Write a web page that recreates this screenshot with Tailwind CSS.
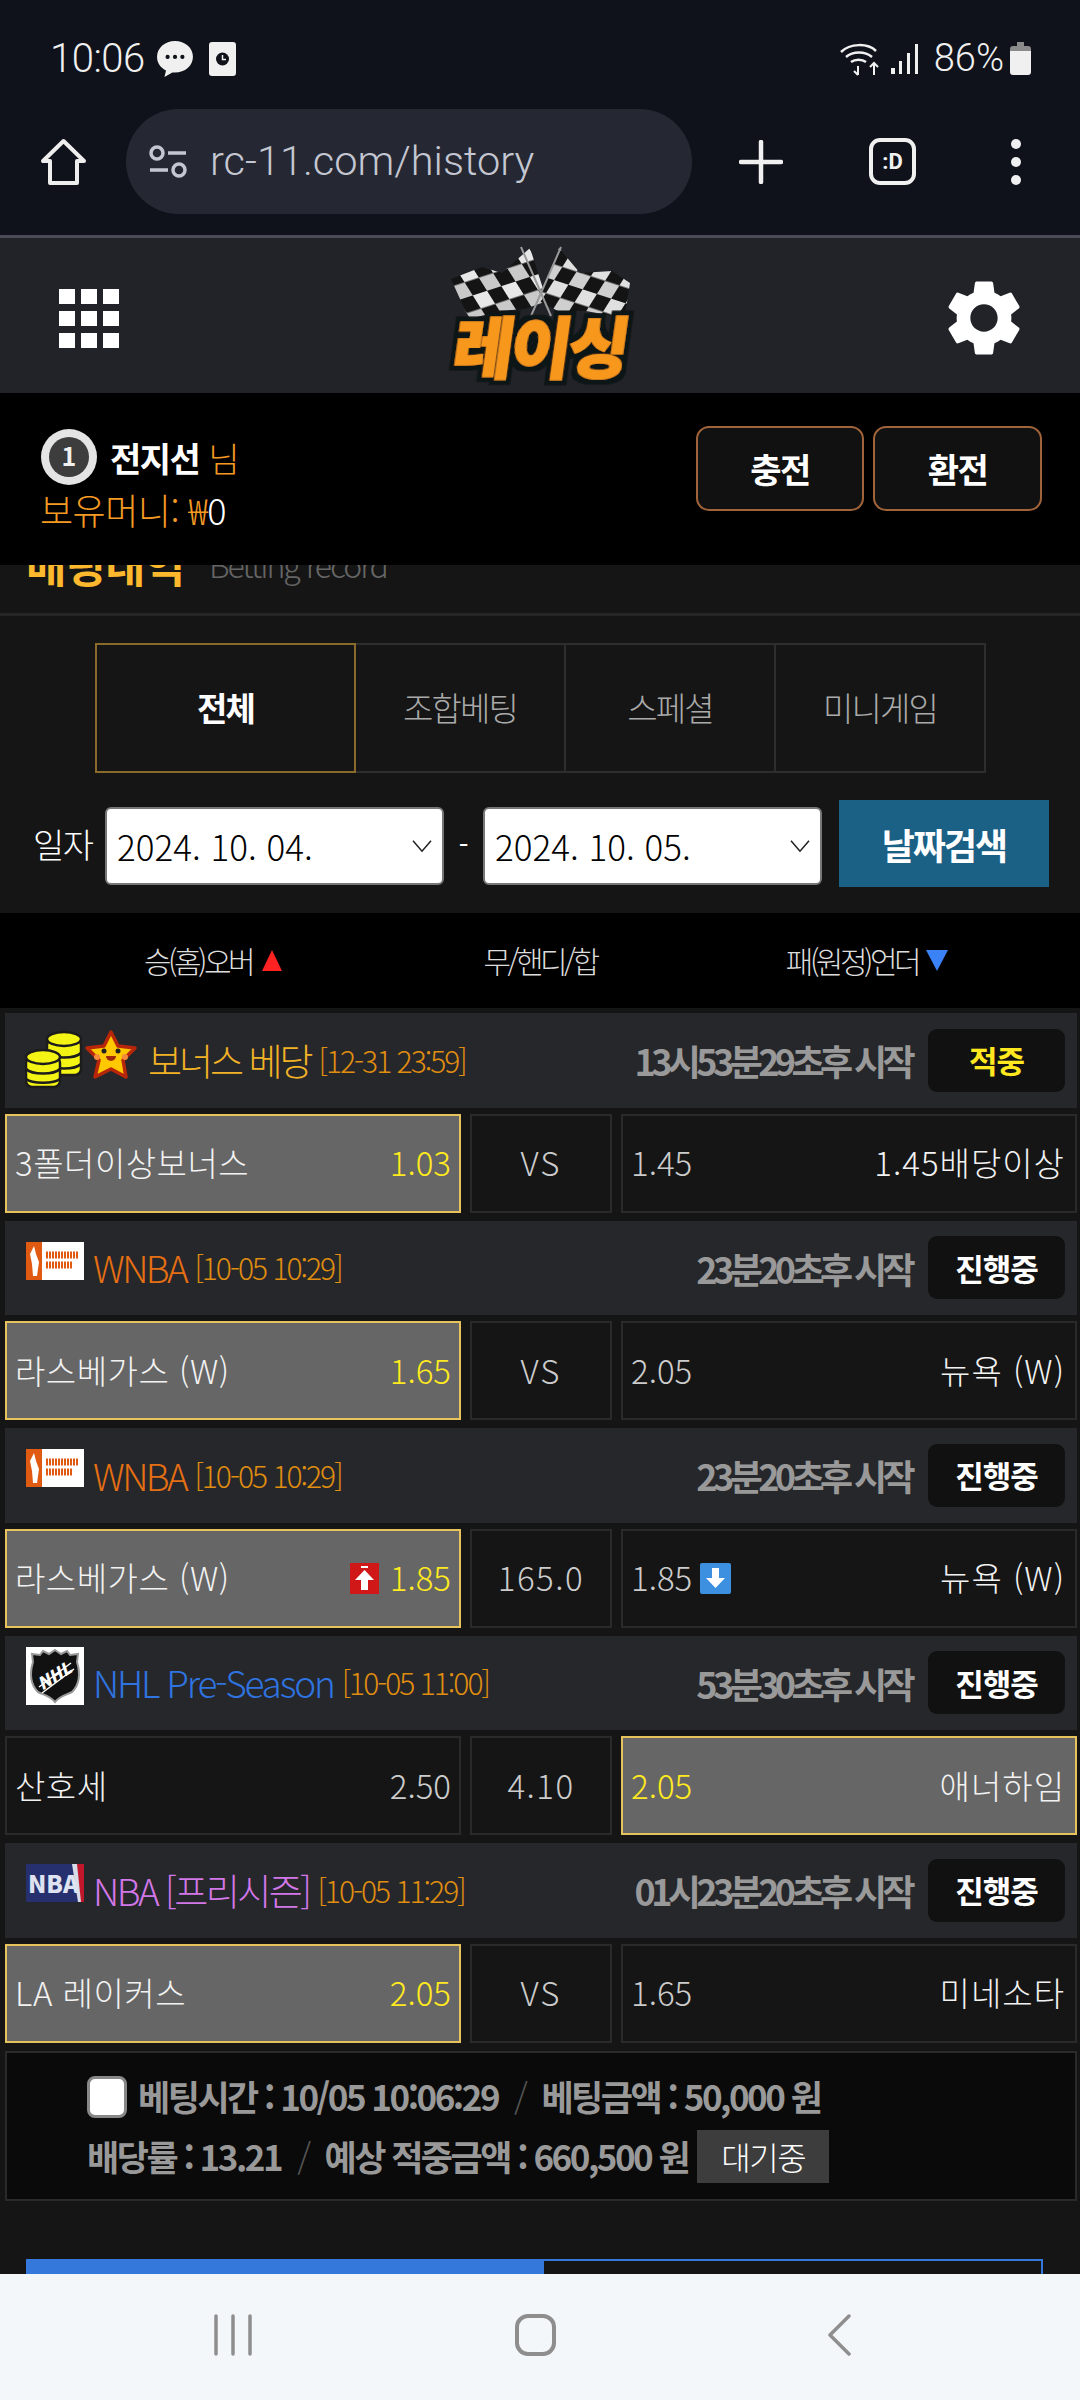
<!DOCTYPE html>
<html lang="ko">
<head>
    <meta charset="UTF-8">
    <title>레이싱 - 배팅내역</title>
    <meta name="viewport" content="width=device-width, initial-scale=1.0">
    <script src="https://cdn.jsdelivr.net/npm/@tailwindcss/browser@4"></script>
</head>
<body class="m-0 bg-black font-['Noto_Sans_CJK_KR','Noto_Sans',sans-serif]">
<div class="relative flex h-[2400px] w-[1080px] flex-col overflow-hidden bg-[#151515]">

    <!-- browser chrome -->
    <div class="h-[235px] shrink-0 bg-[#0f121a] text-white">
        <div class="flex h-[109px] items-center pl-[50px] pr-[49px] pt-[8px] font-['Roboto',sans-serif]">
            <span class="w-[108px] text-[40px] font-light tracking-[-0.5px] text-[#f0f0f0]">10:06</span>
            <svg class="-ml-[2px] h-[38px] w-[38px]" viewBox="0 0 36 36"><path d="M18 1C8.500 1 1 7.600 1 16c0 5.600 3.400 10.300 8.500 12.800L8 35l7.500-4.300c.8.100 1.700.2 2.500.2 9.500 0 17-6.600 17-15S27.500 1 18 1z" fill="#f0f0f0"/><circle cx="11" cy="16" r="2" fill="#0f121a"/><circle cx="18" cy="16" r="2" fill="#0f121a"/><circle cx="25" cy="16" r="2" fill="#0f121a"/></svg>
            <svg class="ml-[15px] h-[34px] w-[27px]" viewBox="0 0 27 34"><rect width="27" height="34" rx="3" fill="#f0f0f0"/><circle cx="13.500" cy="17" r="6.500" fill="#0f121a"/><path d="M13.500 13v4.500h3.500" stroke="#f0f0f0" stroke-width="1.500" fill="none"/></svg>
            <div class="flex-1"></div>
            <svg class="h-[34px] w-[42px]" viewBox="0 0 42 34" fill="none" stroke="#f0f0f0" stroke-width="2.500"><path d="M1 10C10 1 28 1 36 9M6 15c7-6 19-6 26 0M11 20c4-3 11-3 15 0"/><path d="M18 24v9M14 29l4 4M34 33V21M30 25l4-4 4 4" stroke-width="2"/></svg>
            <svg class="ml-[9px] h-[30px] w-[28px]" viewBox="0 0 28 30" fill="#f0f0f0"><rect x="0" y="24" width="4" height="6"/><rect x="8" y="17" width="3" height="13"/><rect x="16" y="9" width="3" height="21"/><rect x="24" y="0" width="3" height="30"/></svg>
            <span class="ml-[15px] text-[38px] font-light text-[#f0f0f0]">86%</span>
            <svg class="ml-[6px] h-[33px] w-[21px]" viewBox="0 0 21 33"><path d="M7 0h7v4h4a3 3 0 0 1 3 3v2H0V7a3 3 0 0 1 3-3h4z" fill="#8a8a8a"/><path d="M0 9h21v21a3 3 0 0 1-3 3H3a3 3 0 0 1-3-3z" fill="#f0f0f0"/></svg>
        </div>
        <div class="flex h-[105px] items-center">
            <svg class="ml-[40px] h-[48px] w-[47px]" viewBox="0 0 47 48" fill="none" stroke="#eee" stroke-width="4" stroke-linejoin="round"><path d="M23.500 3 3 23h7v22h27V23h7z"/></svg>
            <div class="ml-[39px] flex h-[105px] w-[566px] items-center rounded-full bg-[#252833] pl-[22px]">
                <svg class="h-[34px] w-[40px]" viewBox="0 0 40 34" fill="none" stroke="#c4c7d2" stroke-width="3.500"><circle cx="9" cy="8" r="6"/><path d="M20 8h18M2 25h18"/><circle cx="31" cy="25" r="6"/></svg>
                <span class="ml-[22px] font-['Roboto',sans-serif] text-[41.500px] font-light text-[#c4c7d2]">rc-11.com/history</span>
            </div>
            <svg class="ml-[47px] h-[44px] w-[44px]" viewBox="0 0 44 44" stroke="#f0f0f0" stroke-width="4.500" stroke-linecap="round"><path d="M22 2v40M2 22h40"/></svg>
            <div class="ml-[86px] flex h-[47px] w-[47px] items-center justify-center rounded-[11px] border-[4px] border-[#f0f0f0] font-['Roboto',sans-serif] text-[22px] font-bold text-[#f0f0f0]">:D</div>
            <div class="ml-[95px] flex flex-col gap-[8px]">
                <span class="h-[10px] w-[10px] rounded-full bg-[#f0f0f0]"></span>
                <span class="h-[10px] w-[10px] rounded-full bg-[#f0f0f0]"></span>
                <span class="h-[10px] w-[10px] rounded-full bg-[#f0f0f0]"></span>
            </div>
        </div>
    </div>
    <div class="h-[3px] shrink-0 bg-[#4a4b58]"></div>

    <!-- site header -->
    <div class="relative flex h-[155px] shrink-0 items-center justify-between bg-[#212328] pl-[59px] pr-[58px] pt-[5px]">
        <div class="grid grid-cols-[16px_16px_16px] grid-rows-[15px_15px_15px] gap-[7px] gap-x-[6px]">
            <span class="bg-white"></span><span class="bg-white"></span><span class="bg-white"></span>
            <span class="bg-white"></span><span class="bg-white"></span><span class="bg-white"></span>
            <span class="bg-white"></span><span class="bg-white"></span><span class="bg-white"></span>
        </div>
        <!-- logo, flags and wordmark -->
        <svg class="absolute left-[440px] top-[5px] h-[148px] w-[200px]" viewBox="0 0 200 148">
            <defs>
                <pattern id="chkL" width="30" height="30" patternUnits="userSpaceOnUse" patternTransform="rotate(-18) skewX(14)">
                    <rect width="30" height="30" fill="#141414"/><rect width="15" height="15" fill="#e8e8e8"/><rect x="15" y="15" width="15" height="15" fill="#c9c9c9"/>
                </pattern>
                <pattern id="chkR" width="30" height="30" patternUnits="userSpaceOnUse" patternTransform="rotate(18) skewX(-14)">
                    <rect width="30" height="30" fill="#141414"/><rect width="15" height="15" fill="#e0e0e0"/><rect x="15" y="15" width="15" height="15" fill="#cfcfcf"/>
                </pattern>
                <filter id="logoEdge" x="-10%" y="-20%" width="120%" height="140%">
                    <feMorphology in="SourceAlpha" operator="dilate" radius="5" result="fat"/>
                    <feFlood flood-color="#111214"/>
                    <feComposite in2="fat" operator="in"/>
                    <feMerge><feMergeNode/><feMergeNode in="SourceGraphic"/></feMerge>
                </filter>
            </defs>
            <polygon points="11,36 42,24 62,30 90,5 107,58 85,66 60,68 37,74 30,78" fill="url(#chkL)"/>
            <polygon points="190,40 172,28 140,30 119,5 99,58 118,68 146,68 168,72 184,78" fill="url(#chkR)"/>
            <path d="M81 4 111 73M121 4 91 73" stroke="#9a9a9a" stroke-width="2"/>
            <text x="97" y="130" text-anchor="middle" transform="skewX(-8) translate(18 0)" font-size="66" font-weight="900" letter-spacing="-3" fill="#f7971e" stroke="#f7971e" stroke-width="1.500" filter="url(#logoEdge)">레이싱</text>
        </svg>
        <svg class="h-[76px] w-[76px]" viewBox="2 2 20 20" fill="#fff"><path d="M19.140 12.940c.040-.300.060-.610.060-.940 0-.320-.020-.640-.070-.940l2.030-1.580a.490.490 0 0 0 .120-.610l-1.920-3.320a.488.488 0 0 0-.590-.220l-2.390.960c-.500-.380-1.030-.700-1.620-.940l-.360-2.540a.484.484 0 0 0-.480-.410h-3.840c-.240 0-.430.170-.470.410l-.360 2.540c-.590.240-1.130.570-1.620.940l-2.390-.960c-.220-.080-.470 0-.590.220L2.740 8.870c-.120.210-.080.470.120.610l2.030 1.580c-.050.300-.090.630-.090.940s.020.640.070.940l-2.030 1.580a.490.490 0 0 0-.120.610l1.920 3.320c.120.220.370.290.590.220l2.390-.960c.500.380 1.030.700 1.620.940l.360 2.540c.050.240.240.410.480.410h3.840c.240 0 .440-.170.470-.410l.360-2.540c.590-.240 1.130-.560 1.620-.94l2.390.960c.220.080.470 0 .590-.220l1.920-3.320c.120-.220.070-.47-.12-.61l-2.010-1.580zM12 15.600c-1.980 0-3.600-1.620-3.600-3.600s1.620-3.600 3.600-3.600 3.600 1.620 3.600 3.600-1.620 3.600-3.600 3.600z"/></svg>
    </div>

    <!-- user bar -->
    <div class="flex h-[172px] shrink-0 justify-between bg-black pl-[40px] pr-[38px] pt-[32px]">
        <div>
            <div class="flex h-[64px] items-center">
                <svg class="h-[58px] w-[58px]" viewBox="0 0 58 58"><circle cx="29" cy="29" r="28" fill="#e4e4e4"/><circle cx="29" cy="29" r="20" fill="#3d3d3d"/><text x="29" y="38" text-anchor="middle" font-size="25" font-weight="700" fill="#f0f0f0">1</text></svg>
                <span class="ml-[12px] text-[34px] font-bold tracking-[-1.500px] text-white">전지선</span>
                <span class="ml-[9px] text-[34px] font-light text-[#f59a23]">님</span>
            </div>
            <div class="text-[36px] font-light leading-[40px] tracking-[-0.500px] text-[#f59a23]">보유머니: ₩<span class="text-white">0</span></div>
        </div>
        <div class="mt-[1px] flex h-[85px] gap-[9px]">
            <button class="h-[85px] w-[168px] rounded-[13px] border-2 border-[#a0633a] bg-[#111] text-[34px] font-bold tracking-[-1.500px] text-white">충전</button>
            <button class="h-[85px] w-[169px] rounded-[13px] border-2 border-[#a0633a] bg-[#111] text-[34px] font-bold tracking-[-1.500px] text-white">환전</button>
        </div>
    </div>

    <!-- page title, scrolled half under the user bar -->
    <div class="flex h-[51px] shrink-0 items-start overflow-hidden border-b-[3px] border-[#262626] pl-[26px]">
        <span class="-mt-[31px] text-[44px] font-bold leading-[60px] tracking-[-1px] text-[#fdb92e]">배팅내역</span>
        <span class="-mt-[28px] ml-[25px] text-[32px] font-light leading-[54px] tracking-[-2px] text-[#666]">Betting record</span>
    </div>

    <!-- tabs -->
    <div class="ml-[95px] mt-[27px] flex h-[130px] w-[891px] shrink-0 text-[33px] tracking-[-1.800px]">
        <div class="flex w-[261px] items-center justify-center border-2 border-[#8a6a2a] font-bold text-white">전체</div>
        <div class="flex w-[210px] items-center justify-center border-2 border-l-0 border-[#2e2e2e] font-light text-[#aaa]">조합베팅</div>
        <div class="flex w-[210px] items-center justify-center border-2 border-l-0 border-[#2e2e2e] font-light text-[#aaa]">스페셜</div>
        <div class="flex w-[210px] items-center justify-center border-2 border-l-0 border-[#2e2e2e] font-light text-[#aaa]">미니게임</div>
    </div>

    <!-- date search -->
    <div class="mt-[27px] flex h-[87px] shrink-0 items-center pl-[33px]">
        <span class="w-[72px] text-[34px] font-light tracking-[-1.500px] text-white">일자</span>
        <div class="mt-[5px] flex h-[78px] w-[339px] items-center justify-between rounded-[6px] border-2 border-[#777] bg-white pl-[10px] pr-[9px] text-[35px] font-light text-black">
            <span>2024. 10. 04.</span>
            <svg class="h-[12px] w-[22px]" viewBox="0 0 23 14" fill="none" stroke="#222" stroke-width="1.800"><path d="M1 1l10.500 12L22 1"/></svg>
        </div>
        <span class="w-[39px] text-center text-[28px] text-white">-</span>
        <div class="mt-[5px] flex h-[78px] w-[339px] items-center justify-between rounded-[6px] border-2 border-[#777] bg-white pl-[10px] pr-[9px] text-[35px] font-light text-black">
            <span>2024. 10. 05.</span>
            <svg class="h-[12px] w-[22px]" viewBox="0 0 23 14" fill="none" stroke="#222" stroke-width="1.800"><path d="M1 1l10.500 12L22 1"/></svg>
        </div>
        <button class="ml-[17px] h-[87px] w-[210px] bg-[#1b6085] text-[36px] font-bold tracking-[-2px] text-white">날짜검색</button>
    </div>

    <!-- column heads -->
    <div class="mt-[26px] grid h-[95px] shrink-0 grid-cols-[216px_1fr_216px] items-center bg-black pl-[105px] pr-[105px] text-[30px] font-light tracking-[-3.500px] text-[#ddd]">
        <div class="flex items-center gap-[10px] justify-self-center">승(홈)오버<span class="h-0 w-0 border-x-[10px] border-b-[21px] border-x-transparent border-b-[#f22]"></span></div>
        <div class="justify-self-center">무/핸디/합</div>
        <div class="flex items-center gap-[8px] justify-self-center whitespace-nowrap">패(원정)언더<span class="h-0 w-0 border-x-[11px] border-t-[21px] border-x-transparent border-t-[#3b82f6]"></span></div>
    </div>

    <!-- bets -->
    <div class="mt-[5px] flex shrink-0 flex-col gap-[8px] pl-[5px] pr-[3px]">

        <div>
            <div class="flex h-[94.500px] items-center justify-between bg-[#26272b] pl-[20px] pr-[12px]">
                <div class="flex items-center">
                    <svg class="h-[62px] w-[114px]" viewBox="0 0 114 62">
                        <g stroke="#1c1c1c" stroke-width="2.500" fill="#f4f414">
                            <rect x="22" y="10" width="34" height="36" rx="6"/><ellipse cx="39" cy="10" rx="17" ry="7"/><path d="M22 24c6 6 28 6 34 0M22 35c6 6 28 6 34 0" fill="none"/>
                            <rect x="1" y="28" width="34" height="30" rx="6"/><ellipse cx="18" cy="28" rx="17" ry="7"/><path d="M1 40c6 6 28 6 34 0M1 50c6 5 28 5 34 0" fill="none"/>
                        </g>
                        <path d="M86 3l7 14 17 2-12 12 3 17-15-8-16 8 4-17-12-12 17-2z" fill="#ffc800" stroke="#b8260a" stroke-width="3.500" stroke-linejoin="round"/>
                        <circle cx="79" cy="22" r="2.500" fill="#222"/><circle cx="93" cy="22" r="2.500" fill="#222"/><path d="M81 27h10a5 5 0 0 1-10 0z" fill="#a02808"/><circle cx="72" cy="28" r="3" fill="#f58a3a"/><circle cx="100" cy="28" r="3" fill="#f58a3a"/>
                    </svg>
                    <span class="ml-[9px] text-[37px] font-light tracking-[-3px] text-[#f3b325]">보너스 베당</span>
                    <span class="ml-[8px] text-[30px] font-light tracking-[-2px] text-[#e08e10]">[12-31 23:59]</span>
                </div>
                <div class="flex items-center">
                    <span class="text-[36px] font-bold tracking-[-4.600px] text-[#999]">13시53분29초후 시작</span>
                    <span class="ml-[17px] flex h-[63px] w-[137px] items-center justify-center rounded-[9px] bg-[#111] text-[31px] font-bold tracking-[-1px] text-[#ffe81f]">적중</span>
                </div>
            </div>
            <div class="mt-[6px] flex h-[99px] gap-[9px]">
                <div class="flex w-[456px] items-center justify-between border-2 border-[#e6c35c] bg-[#666] pl-[8px] pr-[8px] text-[33px] font-light tracking-[0.500px] text-[#f2f2f2]">
                    <span>3폴더이상보너스</span><span class="tracking-normal text-[#ffea1f]">1.03</span>
                </div>
                <div class="flex w-[142px] items-center justify-center border-2 border-[#2a2a2a] text-[33px] font-light tracking-[2px] text-[#ccc]">VS</div>
                <div class="flex w-[456px] items-center justify-between border-2 border-[#2a2a2a] pl-[8px] pr-[10px] text-[33px] font-light tracking-[1px] text-[#f2f2f2]">
                    <span class="tracking-normal text-[#ccc]">1.45</span><span>1.45배당이상</span>
                </div>
            </div>
        </div>

        <div>
            <div class="flex h-[94.500px] items-center justify-between bg-[#26272b] pl-[21px] pr-[12px]">
                <div class="flex items-center">
                    <svg class="mb-[14px] h-[38px] w-[58px]" viewBox="0 0 58 38"><rect width="58" height="38" fill="#fff"/><rect width="16" height="38" fill="#e05a12"/><path d="M8 4l2 8 3 8-2 14H7l-1-12-2-10z" fill="#fff"/><path d="M20 13h32M20 23h26" stroke="#e05a12" stroke-width="7" stroke-dasharray="2 1"/></svg>
                    <span class="ml-[9px] text-[37px] font-light tracking-[-2.500px] text-[#e56f12]">WNBA</span>
                    <span class="ml-[8px] text-[30px] font-light tracking-[-2px] text-[#e08e10]">[10-05 10:29]</span>
                </div>
                <div class="flex items-center">
                    <span class="text-[36px] font-bold tracking-[-4.600px] text-[#999]">23분20초후 시작</span>
                    <span class="ml-[17px] flex h-[63px] w-[137px] items-center justify-center rounded-[9px] bg-[#111] text-[31px] font-bold tracking-[-1px] text-white">진행중</span>
                </div>
            </div>
            <div class="mt-[6px] flex h-[99px] gap-[9px]">
                <div class="flex w-[456px] items-center justify-between border-2 border-[#e6c35c] bg-[#666] pl-[8px] pr-[8px] text-[33px] font-light tracking-[0.500px] text-[#f2f2f2]">
                    <span>라스베가스 (W)</span><span class="tracking-normal text-[#ffea1f]">1.65</span>
                </div>
                <div class="flex w-[142px] items-center justify-center border-2 border-[#2a2a2a] text-[33px] font-light tracking-[2px] text-[#ccc]">VS</div>
                <div class="flex w-[456px] items-center justify-between border-2 border-[#2a2a2a] pl-[8px] pr-[10px] text-[33px] font-light tracking-[1px] text-[#f2f2f2]">
                    <span class="tracking-normal text-[#ccc]">2.05</span><span>뉴욕 (W)</span>
                </div>
            </div>
        </div>

        <div>
            <div class="flex h-[94.500px] items-center justify-between bg-[#26272b] pl-[21px] pr-[12px]">
                <div class="flex items-center">
                    <svg class="mb-[14px] h-[38px] w-[58px]" viewBox="0 0 58 38"><rect width="58" height="38" fill="#fff"/><rect width="16" height="38" fill="#e05a12"/><path d="M8 4l2 8 3 8-2 14H7l-1-12-2-10z" fill="#fff"/><path d="M20 13h32M20 23h26" stroke="#e05a12" stroke-width="7" stroke-dasharray="2 1"/></svg>
                    <span class="ml-[9px] text-[37px] font-light tracking-[-2.500px] text-[#e56f12]">WNBA</span>
                    <span class="ml-[8px] text-[30px] font-light tracking-[-2px] text-[#e08e10]">[10-05 10:29]</span>
                </div>
                <div class="flex items-center">
                    <span class="text-[36px] font-bold tracking-[-4.600px] text-[#999]">23분20초후 시작</span>
                    <span class="ml-[17px] flex h-[63px] w-[137px] items-center justify-center rounded-[9px] bg-[#111] text-[31px] font-bold tracking-[-1px] text-white">진행중</span>
                </div>
            </div>
            <div class="mt-[6px] flex h-[99px] gap-[9px]">
                <div class="flex w-[456px] items-center justify-between border-2 border-[#e6c35c] bg-[#666] pl-[8px] pr-[8px] text-[33px] font-light tracking-[0.500px] text-[#f2f2f2]">
                    <span>라스베가스 (W)</span>
                    <span class="flex items-center gap-[11px] tracking-normal text-[#ffea1f]">
                        <svg class="h-[31px] w-[29px]" viewBox="0 0 29 31"><rect width="29" height="31" fill="#d01818"/><path d="M14.500 7 24 17h-6v10h-7V17H5z" fill="#fff"/><rect x="11" y="3" width="7" height="2" fill="#fff"/></svg>
                        1.85
                    </span>
                </div>
                <div class="flex w-[142px] items-center justify-center border-2 border-[#2a2a2a] text-[33px] font-light tracking-[1.500px] text-[#ccc]">165.0</div>
                <div class="flex w-[456px] items-center justify-between border-2 border-[#2a2a2a] pl-[8px] pr-[10px] text-[33px] font-light tracking-[1px] text-[#f2f2f2]">
                    <span class="flex items-center gap-[8px] tracking-normal text-[#ccc]">1.85
                        <svg class="h-[31px] w-[31px]" viewBox="0 0 31 31"><rect width="31" height="31" rx="2" fill="#3d8fe0"/><path d="M15.500 25 6 15h6V5h7v10h6z" fill="#fff"/></svg>
                    </span>
                    <span>뉴욕 (W)</span>
                </div>
            </div>
        </div>

        <div>
            <div class="flex h-[94.500px] items-center justify-between bg-[#26272b] pl-[21px] pr-[12px]">
                <div class="flex items-center">
                    <svg class="mb-[14px] h-[58px] w-[58px]" viewBox="0 0 58 58"><rect width="58" height="58" fill="#fff"/><path d="M29 3l6 4 6-3 3 4 8-1-1 8c3 10 3 22-5 30-6 3-12 4-17 10-5-6-11-7-17-10C4 37 4 25 7 15L6 7l8 1 3-4 6 3z" fill="#111" stroke="#999" stroke-width="2"/><path d="M13 40 45 16M16 46l32-24" stroke="#fff" stroke-width="1.500"/><text x="29" y="35" text-anchor="middle" transform="rotate(-32 29 30)" font-size="17" font-weight="900" font-style="italic" fill="#fff">NHL</text></svg>
                    <span class="ml-[9px] text-[37px] font-light tracking-[-2.200px] text-[#2f74e0]">NHL Pre-Season</span>
                    <span class="ml-[8px] text-[30px] font-light tracking-[-2px] text-[#e08e10]">[10-05 11:00]</span>
                </div>
                <div class="flex items-center">
                    <span class="text-[36px] font-bold tracking-[-4.600px] text-[#999]">53분30초후 시작</span>
                    <span class="ml-[17px] flex h-[63px] w-[137px] items-center justify-center rounded-[9px] bg-[#111] text-[31px] font-bold tracking-[-1px] text-white">진행중</span>
                </div>
            </div>
            <div class="mt-[6px] flex h-[99px] gap-[9px]">
                <div class="flex w-[456px] items-center justify-between border-2 border-[#2a2a2a] pl-[8px] pr-[8px] text-[33px] font-light tracking-[0.500px] text-[#f2f2f2]">
                    <span>산호세</span><span class="tracking-normal text-[#ccc]">2.50</span>
                </div>
                <div class="flex w-[142px] items-center justify-center border-2 border-[#2a2a2a] text-[33px] font-light tracking-[1.500px] text-[#ccc]">4.10</div>
                <div class="flex w-[456px] items-center justify-between border-2 border-[#e6c35c] bg-[#666] pl-[8px] pr-[10px] text-[33px] font-light tracking-[1px] text-[#f2f2f2]">
                    <span class="tracking-normal text-[#ffea1f]">2.05</span><span>애너하임</span>
                </div>
            </div>
        </div>

        <div>
            <div class="flex h-[94.500px] items-center justify-between bg-[#26272b] pl-[21px] pr-[12px]">
                <div class="flex items-center">
                    <svg class="mb-[14px] h-[38px] w-[58px]" viewBox="0 0 58 38"><rect width="58" height="38" fill="#26306e"/><path d="M46 0h12v38H52z" fill="#d8dce8"/><path d="M51 0h7v38h-3z" fill="#c0182a"/><text x="2" y="29" font-size="24" font-weight="900" fill="#dfe2f0">NBA</text></svg>
                    <span class="ml-[9px] text-[37px] font-light tracking-[-2.500px] text-[#d277e8]">NBA [프리시즌]</span>
                    <span class="ml-[8px] text-[30px] font-light tracking-[-2px] text-[#e08e10]">[10-05 11:29]</span>
                </div>
                <div class="flex items-center">
                    <span class="text-[36px] font-bold tracking-[-4.600px] text-[#999]">01시23분20초후 시작</span>
                    <span class="ml-[17px] flex h-[63px] w-[137px] items-center justify-center rounded-[9px] bg-[#111] text-[31px] font-bold tracking-[-1px] text-white">진행중</span>
                </div>
            </div>
            <div class="mt-[6px] flex h-[99px] gap-[9px]">
                <div class="flex w-[456px] items-center justify-between border-2 border-[#e6c35c] bg-[#666] pl-[8px] pr-[8px] text-[33px] font-light tracking-[0.500px] text-[#f2f2f2]">
                    <span>LA 레이커스</span><span class="tracking-normal text-[#ffea1f]">2.05</span>
                </div>
                <div class="flex w-[142px] items-center justify-center border-2 border-[#2a2a2a] text-[33px] font-light tracking-[2px] text-[#ccc]">VS</div>
                <div class="flex w-[456px] items-center justify-between border-2 border-[#2a2a2a] pl-[8px] pr-[10px] text-[33px] font-light tracking-[1px] text-[#f2f2f2]">
                    <span class="tracking-normal text-[#ccc]">1.65</span><span>미네소타</span>
                </div>
            </div>
        </div>
    </div>

    <!-- bet summary -->
    <div class="ml-[5px] mr-[3px] mt-[8px] h-[150px] shrink-0 border-2 border-[#2a2a2a] bg-[#0a0a0a] pl-[80px] pt-[22px] text-[35px] font-bold tracking-[-2.500px] text-[#999]">
        <div class="flex h-[44px] items-center">
            <span class="h-[42px] w-[40px] rounded-[8px] border-[3px] border-[#888] bg-white"></span>
            <span class="ml-[11px]">베팅시간 : 10/05 10:06:29</span>
            <span class="mx-[16px] font-light text-[#555]">/</span>
            <span>베팅금액 : 50,000 원</span>
        </div>
        <div class="mt-[11px] flex h-[53px] items-center">
            <span>배당률 : 13.21</span>
            <span class="mx-[16px] font-light text-[#555]">/</span>
            <span>예상 적중금액 : 660,500 원</span>
            <span class="ml-[9px] flex h-[53px] w-[132px] items-center justify-center bg-[#3d3d3d] text-[32px] font-light tracking-[-1.500px] text-white">대기중</span>
        </div>
    </div>

    <!-- next record, cut off by the nav bar -->
    <div class="ml-[26px] mt-[58px] flex h-[40px] w-[1017px] shrink-0 border-2 border-[#3478dc]">
        <div class="h-full w-[516px] bg-[#3478dc]"></div>
    </div>

    <!-- android nav -->
    <div class="absolute bottom-0 left-0 flex h-[126px] w-[1080px] items-center bg-[#f3f7fa] pb-[4px]">
        <svg class="ml-[214px] h-[42px] w-[38px]" viewBox="0 0 38 42" stroke="#8e8e8e" stroke-width="3.500" stroke-linecap="round"><path d="M2 2v38M19 2v38M36 2v38"/></svg>
        <svg class="ml-[263px] h-[42px] w-[41px]" viewBox="0 0 41 42" fill="none" stroke="#8e8e8e" stroke-width="4"><rect x="2" y="2" width="37" height="38" rx="11"/></svg>
        <svg class="ml-[271px] h-[42px] w-[24px]" viewBox="0 0 24 42" fill="none" stroke="#8e8e8e" stroke-width="3.500" stroke-linecap="round" stroke-linejoin="round"><path d="M22 2 3 21l19 19"/></svg>
    </div>
</div>
</body>
</html>
